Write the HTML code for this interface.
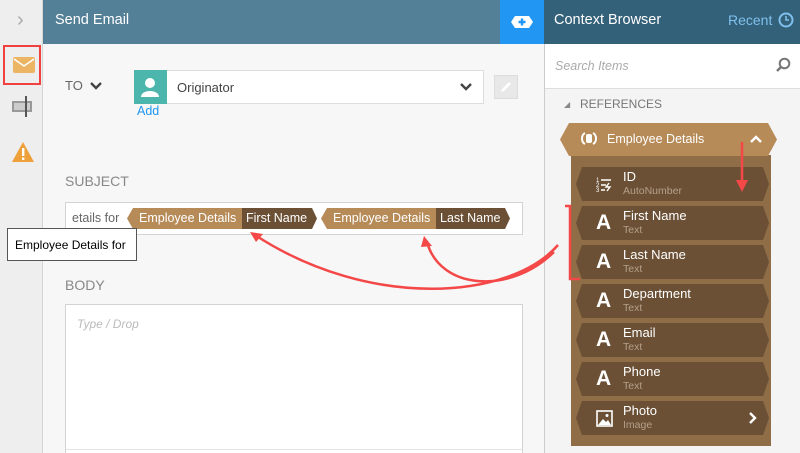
<!DOCTYPE html>
<html><head><style>
*{margin:0;padding:0;box-sizing:border-box}
html,body{width:800px;height:453px;overflow:hidden}
body{position:relative;font-family:"Liberation Sans",sans-serif;background:#f7f7f7}
.abs{position:absolute}
.lbl{color:#888;font-size:14px}
.item{position:absolute;left:576px;width:193px;height:34px;background:#6b5035;clip-path:polygon(6px 0,calc(100% - 6px) 0,100% 50%,calc(100% - 6px) 100%,6px 100%,0 50%)}
.item .A{position:absolute;left:20px;top:5px;color:#fff;font-weight:bold;font-size:21px}
.item .n{position:absolute;left:47px;top:2px;color:#fff;font-size:13px}
.item .t{position:absolute;left:47px;top:18px;color:#b4a08a;font-size:10.5px}
.tag{position:absolute;top:208px;height:21px;font-size:12.5px;color:#fff;line-height:21px}
</style></head><body>
<div class="abs" style="left:0;top:0;width:43px;height:453px;background:#eeeeee;border-right:1px solid #d5d5d5"></div>
<div class="abs" style="left:17px;top:9px;color:#aaa;font-size:20px">&#8250;</div>
<div class="abs" style="left:3px;top:45px;width:38px;height:40px;border:2px solid #f04040"></div>
<div class="abs" style="left:13px;top:57px;width:22px;height:16px;background:#ebb563;border-radius:2px"></div>
<svg class="abs" style="left:13px;top:57px" width="22" height="16"><path d="M1 2 L11 9 L21 2" stroke="#fff" stroke-width="1.5" fill="none"/></svg>
<div class="abs" style="left:12px;top:101px;width:20px;height:11px;border:2px solid #999;background:#ccc"></div>
<div class="abs" style="left:25px;top:96px;width:2px;height:21px;background:#555"></div>
<svg class="abs" style="left:11px;top:141px" width="24" height="22"><path d="M12 1 L23 21 L1 21Z" fill="#eea03a"/><rect x="11" y="7" width="2.4" height="8" fill="#fff"/><rect x="11" y="16.5" width="2.4" height="2.4" fill="#fff"/></svg>
<!-- header -->
<div class="abs" style="left:43px;top:0;width:457px;height:44px;background:#537f97"></div>
<div class="abs" style="left:55px;top:12px;color:#fff;font-size:14.5px">Send Email</div>
<div class="abs" style="left:500px;top:0;width:44px;height:44px;background:#2196f3"></div>
<svg class="abs" style="left:510px;top:15px" width="24" height="14"><path d="M5 1 H19 L23 7 L19 13 H5 L1 7Z" fill="#fff"/><path d="M12 3.5 V10.5 M8.5 7 H15.5" stroke="#2196f3" stroke-width="2.4"/></svg>
<!-- TO row -->
<div class="abs lbl" style="left:65px;top:78px;font-size:13px;color:#666">TO</div>
<svg class="abs" style="left:89px;top:81px" width="14" height="10"><path d="M2 2 L7 7 L12 2" stroke="#444" stroke-width="2.4" fill="none"/></svg>
<div class="abs" style="left:134px;top:70px;width:350px;height:34px;background:#fff;border:1px solid #ddd"></div>
<div class="abs" style="left:134px;top:70px;width:33px;height:34px;background:#4db6ac"></div>
<svg class="abs" style="left:140px;top:75px" width="20" height="24"><circle cx="10" cy="8" r="5" fill="#fff"/><path d="M1 22 C1 14 19 14 19 22Z" fill="#fff"/></svg>
<div class="abs" style="left:177px;top:80px;color:#444;font-size:13px">Originator</div>
<svg class="abs" style="left:459px;top:82px" width="14" height="10"><path d="M2 2 L7 7 L12 2" stroke="#444" stroke-width="2.4" fill="none"/></svg>
<div class="abs" style="left:494px;top:75px;width:24px;height:24px;background:#e8e8e8;border:1px solid #ddd"></div>
<svg class="abs" style="left:498px;top:79px" width="16" height="16"><path d="M3 13 L4 10 L11 3 L13 5 L6 12Z" fill="#fff"/></svg>
<div class="abs" style="left:137px;top:104px;color:#2196f3;font-size:12.5px">Add</div>
<!-- subject -->
<div class="abs lbl" style="left:65px;top:173px">SUBJECT</div>
<div class="abs" style="left:65px;top:202px;width:458px;height:33px;background:#fff;border:1px solid #d3d3d3"></div>
<div class="abs" style="left:72px;top:211px;color:#666;font-size:12.5px">etails for</div>
<div class="tag" style="left:127px;width:115px;background:#b68b58;clip-path:polygon(6px 0,100% 0,100% 100%,6px 100%,0 50%);padding-left:12px">Employee Details</div>
<div class="tag" style="left:242px;width:75px;background:#6b5035;clip-path:polygon(0 0,calc(100% - 5px) 0,100% 50%,calc(100% - 5px) 100%,0 100%);padding-left:4px">First Name</div>
<div class="tag" style="left:321px;width:115px;background:#b68b58;clip-path:polygon(6px 0,100% 0,100% 100%,6px 100%,0 50%);padding-left:12px">Employee Details</div>
<div class="tag" style="left:436px;width:74px;background:#6b5035;clip-path:polygon(0 0,calc(100% - 5px) 0,100% 50%,calc(100% - 5px) 100%,0 100%);padding-left:4px">Last Name</div>
<div class="abs" style="left:7px;top:228px;width:130px;height:33px;background:#fff;border:1px solid #555;font-size:12px;padding:9px 7px;color:#000">Employee Details for</div>
<!-- body -->
<div class="abs lbl" style="left:65px;top:277px">BODY</div>
<div class="abs" style="left:65px;top:304px;width:458px;height:160px;background:#fff;border:1px solid #d3d3d3"></div>
<div class="abs" style="left:66px;top:449px;width:456px;height:1px;background:#e3e3e3"></div>
<div class="abs" style="left:77px;top:317px;color:#bbb;font-size:12px;font-style:italic">Type / Drop</div>
<!-- right panel -->
<div class="abs" style="left:544px;top:0;width:256px;height:453px;background:#f4f4f4;border-left:1px solid #ccc"></div>
<div class="abs" style="left:544px;top:0;width:256px;height:44px;background:#34617a"></div>
<div class="abs" style="left:554px;top:12px;color:#fff;font-size:14.5px">Context Browser</div>
<div class="abs" style="left:728px;top:12px;color:#7fc0ec;font-size:14px">Recent</div>
<svg class="abs" style="left:778px;top:12px" width="16" height="16"><circle cx="8" cy="8" r="6.5" stroke="#7fc0ec" stroke-width="2" fill="none"/><path d="M8 4 V8 H11" stroke="#7fc0ec" stroke-width="1.6" fill="none"/></svg>
<div class="abs" style="left:545px;top:44px;width:255px;height:45px;background:#fff;border-bottom:1px solid #ddd"></div>
<div class="abs" style="left:555px;top:59px;color:#aaa;font-size:12.5px;font-style:italic">Search Items</div>
<svg class="abs" style="left:775px;top:57px" width="16" height="16"><circle cx="9.5" cy="6.5" r="4.8" stroke="#777" stroke-width="2" fill="none"/><path d="M6 10 L2 14" stroke="#777" stroke-width="2.4"/></svg>
<div class="abs" style="left:564px;top:100px;color:#888;font-size:8px">&#9698;</div>
<div class="abs" style="left:580px;top:97px;color:#777;font-size:12px">REFERENCES</div>
<div class="abs" style="left:571px;top:155px;width:200px;height:291px;background:#8f6d47"></div>
<div class="abs" style="left:560px;top:123px;width:217px;height:33px;background:#b68b58;clip-path:polygon(9px 0,calc(100% - 9px) 0,100% 50%,calc(100% - 9px) 100%,9px 100%,0 50%)"></div>
<svg class="abs" style="left:580px;top:131px" width="18" height="16"><path d="M5 2 C1 4 1 11 5 13 M13 2 C17 4 17 11 13 13" stroke="#fff" stroke-width="2" fill="none"/><rect x="6" y="3" width="6" height="9" rx="2" fill="#fff"/></svg>
<div class="abs" style="left:607px;top:132px;color:#fff;font-size:12.5px">Employee Details</div>
<svg class="abs" style="left:749px;top:134px" width="14" height="10"><path d="M2 8 L7 3 L12 8" stroke="#fff" stroke-width="2.4" fill="none"/></svg>
<div class="item" style="top:167px"><svg style="position:absolute;left:20px;top:9px" width="18" height="17"><text x="0" y="6" font-size="6" fill="#fff">1</text><text x="0" y="11" font-size="6" fill="#fff">2</text><text x="0" y="16" font-size="6" fill="#fff">3</text><path d="M5 4H15M5 9H10M5 14H9M13 7L10 11H14L11 15" stroke="#fff" stroke-width="1.4" fill="none"/></svg><span class="n">ID</span><span class="t">AutoNumber</span></div>
<div class="item" style="top:206px"><span class="A">A</span><span class="n">First Name</span><span class="t">Text</span></div>
<div class="item" style="top:245px"><span class="A">A</span><span class="n">Last Name</span><span class="t">Text</span></div>
<div class="item" style="top:284px"><span class="A">A</span><span class="n">Department</span><span class="t">Text</span></div>
<div class="item" style="top:323px"><span class="A">A</span><span class="n">Email</span><span class="t">Text</span></div>
<div class="item" style="top:362px"><span class="A">A</span><span class="n">Phone</span><span class="t">Text</span></div>
<div class="item" style="top:401px"><svg style="position:absolute;left:20px;top:9px" width="17" height="17"><rect x="1" y="1" width="15" height="15" stroke="#fff" stroke-width="1.6" fill="none"/><path d="M2 15 L7 9 L10 12 L12 10 L15 15Z" fill="#fff"/><circle cx="11" cy="5.5" r="1.5" fill="#fff"/></svg><span class="n">Photo</span><span class="t">Image</span><svg style="position:absolute;left:172px;top:10px" width="10" height="14"><path d="M2 2 L7 7 L2 12" stroke="#fff" stroke-width="2.4" fill="none"/></svg></div>
<!-- annotations -->
<svg class="abs" style="left:0;top:0" width="800" height="453">
<g stroke="#f44848" stroke-width="2.5" fill="none">
<path d="M565 206 H570 V279 H580"/>
<path d="M742 142 V182"/>
<path d="M558 245 C510 300 370 310 255 235"/>
<path d="M554 252 C510 295 440 290 427 242"/>
</g>
<g fill="#f44848">
<path d="M736 180 L748 180 L742 192Z"/>
<path d="M250 232 L263 234 L256 242Z"/>
<path d="M424 236 L432 246 L421 247Z"/>
</g>
</svg>
</body></html>
